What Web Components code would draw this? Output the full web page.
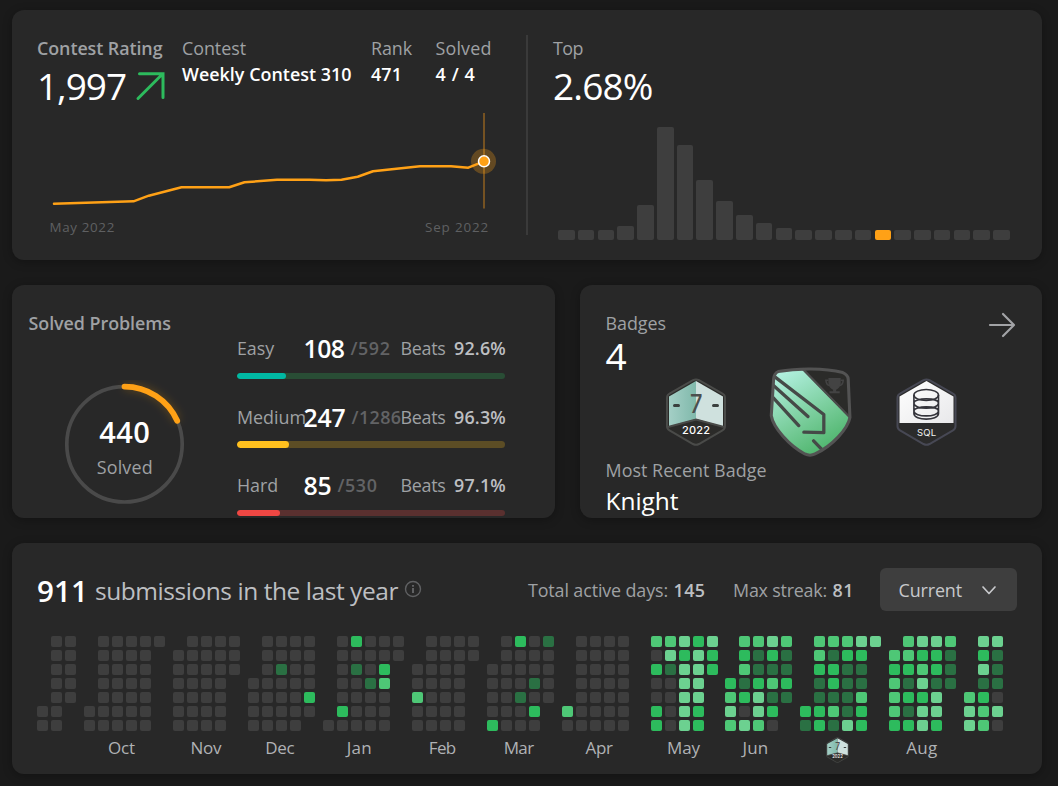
<!DOCTYPE html>
<html lang="en">
<head>
<meta charset="utf-8">
<title>Profile dashboard</title>
<style>
html,body{margin:0;background:#1a1a1a}
body{font-family:"Open Sans","Noto Sans",sans-serif;color:#fff;width:1058px;height:786px;overflow:hidden}
</style>
</head>
<body>
<profile-page></profile-page>

<template id="t-page">
<style>
:host{display:block;box-sizing:border-box;width:1058px;height:786px;padding:10px 16px 0 12px;
 --label:#9fa1a4;--soft:#bdbfc2;--dim:#626365;--orange:#ffa116}
.stack{display:flex;flex-direction:column;gap:25px}
.pair{display:flex;gap:25px}
</style>
<div class="stack">
 <panel-card style="height:250px"><contest-panel></contest-panel></panel-card>
 <div class="pair">
  <panel-card style="width:543px;height:233px"><solved-panel></solved-panel></panel-card>
  <panel-card style="width:462px;height:233px"><badges-panel></badges-panel></panel-card>
 </div>
 <panel-card style="height:231px"><calendar-panel></calendar-panel></panel-card>
</div>
</template>

<template id="t-contest">
<style>
:host{display:flex}
.left{width:514px;box-sizing:border-box;padding:25px 0 0 25px}
.head{display:grid;grid-template-columns:145px 189px 64.5px auto;height:75px}
.rating{display:flex;align-items:flex-start}
.rating svg{margin:10px 0 0 9px}
.line{display:block}
.dates{display:flex;justify-content:space-between;padding-left:12.5px;width:439.500px}
.rule{width:2px;height:200px;margin-top:25px;background:#3a3a3a}
.right{padding:25px 0 0 25px}
.bars{display:flex;align-items:flex-end;justify-content:space-between;width:452px;height:130px;margin-left:5px}
.bars i{width:16.6px;border-radius:2px;background:#3e3e3e}
.bars i.me{background:var(--orange)}
</style>
<div class="left">
 <div class="head">
  <stat-item><fit-text slot="label" w="125.5" style="font-weight:600">Contest Rating</fit-text>
   <div class="rating"><fit-text s="37" l="49" w="89">1,997</fit-text>
   <svg width="30" height="30" viewBox="0 0 30 30" fill="none" stroke="#2dbb5d" stroke-width="3" stroke-linecap="round" stroke-linejoin="miter"><path d="M4.5 2.800H28V26.500M27.500 3L3 27.500"/></svg></div></stat-item>
  <stat-item><fit-text slot="label" w="64">Contest</fit-text><fit-text w="169.5" style="font-weight:600">Weekly Contest 310</fit-text></stat-item>
  <stat-item><fit-text slot="label" w="41">Rank</fit-text><fit-text w="31" style="font-weight:600">471</fit-text></stat-item>
  <stat-item><fit-text slot="label" w="56">Solved</fit-text><fit-text w="40" style="font-weight:600">4 / 4</fit-text></stat-item>
 </div>
 <svg class="line" width="477" height="102" viewBox="37 110 477 102" fill="none">
  <path d="M484 113V208.500" stroke="#8f6020" stroke-width="1.500"/>
  <circle cx="483.500" cy="161.300" r="12.500" fill="#ffa116" fill-opacity=".28"/>
  <path d="M54 203.700L133.500 201.300L148.800 195.700L181.500 187.300H229.200L244.500 182.300L277 179.700H309.500L326 180.300L341.500 179.700L357.700 176.700L373 171.300L420 166.300H451L468.300 167.700L484 161.300" stroke="#ffa116" stroke-width="2.500" stroke-linejoin="round" stroke-linecap="round"/>
  <circle cx="484" cy="161.300" r="5.500" fill="#ffa116" stroke="#fff" stroke-width="1.500"/>
 </svg>
 <div class="dates"><fit-text s="13.4" l="30" w="65.5" style="color:#5f6062">May 2022</fit-text><fit-text s="13.4" l="30" w="64" style="color:#5f6062">Sep 2022</fit-text></div>
</div>
<div class="rule"></div>
<div class="right">
 <stat-item style="height:75px"><fit-text slot="label" w="30">Top</fit-text><fit-text s="37" l="49" w="99.5">2.68%</fit-text></stat-item>
 <div class="bars"></div>
</div>
</template>

<template id="t-solved">
<style>
:host{display:flex;padding:25px 0 0 16px}
.left{width:209px}
.ring{display:grid;width:130px;margin:44px 0 0 31px}
.ring>*{grid-area:1/1}
.num{display:flex;flex-direction:column;align-items:center;padding:33.300px 0 0 1.500px;gap:4.700px}
.rows{padding-top:25.2px}
</style>
<div class="left">
 <fit-text w="142.5" style="font-weight:600;color:var(--label);margin-left:.5px">Solved Problems</fit-text>
 <div class="ring">
  <svg width="130" height="130" viewBox="59 380 130 130" fill="none">
   <defs><filter id="glow" x="-20%" y="-20%" width="150%" height="150%"><feGaussianBlur stdDeviation="4"/></filter></defs>
   <circle cx="124.500" cy="444.300" r="57.700" stroke="#4a4a4a" stroke-width="3.700"/>
   <path d="M124.500 386.600A57.700 57.700 0 0 1 177.200 420.800" stroke="#ffa116" stroke-opacity=".25" stroke-width="7" filter="url(#glow)"/>
   <path d="M124.500 386.600A57.700 57.700 0 0 1 177.200 420.800" stroke="#ffa116" stroke-width="5.800" stroke-linecap="round"/>
  </svg>
  <div class="num"><fit-text s="29" l="36" w="51" style="font-weight:600">440</fit-text><fit-text w="56" style="color:var(--label)">Solved</fit-text></div>
 </div>
</div>
<div class="rows">
 <level-row name="Easy" nw="37" done="108" dw="41" total="/592" tw="40" beats="92.6%" fill="49" c="#00b8a3" track="#294d35"></level-row>
 <level-row name="Medium" nw="69" done="247" dw="42" total="/1286" tw="50" beats="96.3%" fill="52" c="#ffc01e" track="#5c4d25"></level-row>
 <level-row name="Hard" nw="41" done="85" dw="28" total="/530" tw="40" beats="97.1%" fill="43" c="#ef4743" track="#5a302f"></level-row>
</div>
</template>

<template id="t-badges">
<style>
:host{display:block;padding:25px 26px 0 25.500px}
.top{display:flex;justify-content:space-between}
.top svg{margin-top:1px}
.medals{display:flex;align-items:flex-start;height:89px;margin:-7px 0 0 60.500px;position:relative}
.medals>*{flex:none}
.knight{margin:-1px 43.500px 0 43px}
.side{margin-top:9.500px}
.col{display:flex;flex-direction:column;color:#fff}
</style>
<div class="top">
 <div class="col"><fit-text w="60.5" style="color:var(--label)">Badges</fit-text><fit-text s="37" l="39" w="21">4</fit-text></div>
 <svg width="28" height="28" viewBox="0 0 28 28" fill="none" stroke="#a2a3a6" stroke-width="2.200" stroke-linecap="round" stroke-linejoin="round"><path d="M2 14H25.500M15 3L26 14L15 25"/></svg>
</div>
<div class="medals">
 <month-medal class="side" style="width:60px;height:68px"></month-medal>
 <svg class="knight" width="83" height="90" viewBox="0 0 81 89" preserveAspectRatio="none" fill="none">
  <defs><linearGradient id="k" x1=".2" y1="0" x2=".75" y2="1"><stop offset="0" stop-color="#b5f2e4"/><stop offset=".55" stop-color="#79cd9b"/><stop offset="1" stop-color="#46b063"/></linearGradient>
  <clipPath id="kc"><path d="M9 4.500C28 1 54 1 72 5.500Q77 7.500 77.300 12L79 50C77 61 62 78 45 86Q40 88.500 35 86C20 78 4 60 2.200 48L4.500 12Q5 6 9 4.500Z"/></clipPath></defs>
  <g clip-path="url(#kc)"><rect width="81" height="89" fill="#2b2b29"/>
   <path d="M-2 0H30L81 53V89H-2Z" fill="url(#k)"/>
   <path d="M31 0L82 53" stroke="#4c4c4c" stroke-width="2.200"/>
   <path d="M6 10L53.500 47V65L34 64.500M3 17L38 49M2 28L29 58M43.500 73L52 82" stroke="#454947" stroke-width="3.200" stroke-linecap="round" stroke-linejoin="round"/></g>
  <path d="M9 4.500C28 1 54 1 72 5.500Q77 7.500 77.300 12L79 50C77 61 62 78 45 86Q40 88.500 35 86C20 78 4 60 2.200 48L4.500 12Q5 6 9 4.500Z" stroke="#535353" stroke-width="3"/>
  <path d="M58 11H70V16Q69 21 65.500 22.500V24H69V26H59V24H62.500V22.500Q59 21 58 16Z" fill="#434343"/><path d="M58 13H55.500Q56 18.500 60 18.500M70 13H72.500Q72 18.500 68 18.500" stroke="#434343" stroke-width="1.500"/>
 </svg>
 <svg class="side" width="61" height="68" viewBox="0 0 61 68" fill="none">
  <defs><linearGradient id="w" x1="0" y1="0" x2="1" y2="1"><stop offset="0" stop-color="#fff"/><stop offset="1" stop-color="#e8e8ea"/></linearGradient></defs>
  <path d="M27.500 2.200Q30.500.7 33.500 2.200L57 15.700Q59.500 17 59.500 20V48Q59.500 51 57 52.400L33.500 66Q30.500 67.500 27.500 66L4 52.400Q1.500 51 1.500 48V20Q1.500 17 4 15.700Z" fill="#2b2b2b" stroke="#474854" stroke-width="2"/>
  <path d="M3.500 18.500L30.500 3L57.500 18.500V45H3.500Z" fill="url(#w)"/>
  <g stroke="#34343b" stroke-width="1.600"><ellipse cx="30.200" cy="17" rx="12.300" ry="5.500"/><path d="M17.900 17V35.500C17.900 43 42.500 43 42.500 35.500V17M17.900 25C17.900 32 42.500 32 42.500 25C42.500 19.500 17.900 19.500 17.900 25M17.900 33C17.900 39.500 42.500 39.500 42.500 33C42.500 27.500 17.900 27.500 17.900 33"/></g>
  <text x="21" y="57.500" textLength="19" lengthAdjust="spacing" font-family="Inter,sans-serif" font-size="9.500" fill="#f2f2f2">SQL</text>
 </svg>
</div>
<div class="col">
 <fit-text w="161" style="color:var(--label)">Most Recent Badge</fit-text>
 <fit-text s="24.5" l="35" w="73">Knight</fit-text>
</div>
</template>

<template id="t-medal">
<style>:host{display:block}svg{display:block;width:100%;height:100%}</style>
<svg viewBox="0 0 60 68" fill="none">
 <defs><linearGradient id="a" x1="0" y1="0" x2="1" y2="0"><stop offset="0" stop-color="#a4cfc6"/><stop offset="1" stop-color="#80b9ab"/></linearGradient></defs>
 <path d="M27 2.200Q30 .7 33 2.200L56.500 15.700Q59 17 59 20V48Q59 51 56.500 52.400L33 66Q30 67.500 27 66L3.500 52.400Q1 51 1 48V20Q1 17 3.500 15.700Z" fill="#2b2b29" stroke="#4a4b49" stroke-width="2"/>
 <path d="M30 3V41L3 48.500V18.500Z" fill="url(#a)"/>
 <path d="M30 3V41L57 48.500V18.500Z" fill="#cfe1de"/>
 <path d="M2 49L30 41.500L58 49" stroke="#484947" stroke-width="2"/>
 <path d="M8.500 27.500H12.500M47.500 27.500H51.500" stroke="#3a403e" stroke-width="3" stroke-linecap="round"/>
 <text x="24" y="35" font-family="Inter,sans-serif" font-weight="500" font-size="26" textLength="12.500" lengthAdjust="spacingAndGlyphs" fill="#4c4f4e">7</text>
 <text x="16" y="56" font-family="Inter,sans-serif" font-weight="500" font-size="11" textLength="28" lengthAdjust="spacing" fill="#fff">2022</text>
</svg>
</template>

<template id="t-calendar">
<style>
:host{display:block;padding:25px 25px 0 25px}
.head{display:flex;align-items:center;height:43px}
.soft{color:var(--soft)}.label{color:var(--label)}.b{font-weight:600}
.big{padding-top:1px}
.info{margin:-1.500px auto 0 5.500px}
.select{display:flex;align-items:center;justify-content:space-between;box-sizing:border-box;width:137px;height:43px;padding:0 20px 0 18.500px;border-radius:6px;background:#3e3e3e;margin-left:26px;color:#c8c9cc}
.months{display:flex;gap:7.950px;margin-top:25px}
</style>
<div class="head">
 <fit-text class="b big" s="29.5" l="42" w="51">911</fit-text>
 <fit-text class="soft big" s="24.5" l="42" w="303" style="margin-left:7px">submissions in the last year</fit-text>
 <svg class="info" width="18" height="18" viewBox="0 0 18 18" fill="none" stroke="#606163" stroke-width="1.400"><circle cx="9" cy="9" r="7.500"/><path d="M9 8V13" stroke-width="2"/><path d="M9 5V6.700" stroke-width="2"/></svg>
 <fit-text class="label" w="140">Total active days:</fit-text>
 <fit-text class="soft b" w="32" style="margin-left:5.500px">145</fit-text>
 <fit-text class="label" w="94" style="margin-left:27.500px">Max streak:</fit-text>
 <fit-text class="soft b" w="21.5" style="margin-left:5.500px">81</fit-text>
 <div class="select"><fit-text w="63.5">Current</fit-text><svg width="16" height="16" viewBox="0 0 16 16" fill="none" stroke="#c8c9cc" stroke-width="1.700" stroke-linecap="round" stroke-linejoin="round"><path d="M2 5L8 11.500L14 5"/></svg></div>
</div>
<div class="months"></div>
</template>

<script>
const tpl = id => document.getElementById(id).content.cloneNode(true);

/* Text run whose tracking is adjusted to a set advance width. */
class FitText extends HTMLElement {
  connectedCallback() {
    if (this.shadowRoot) return;
    const s = +(this.getAttribute('s') || 17.9), l = +(this.getAttribute('l') || 26), w = +this.getAttribute('w');
    const lh = s < 30 ? l + 1 : l;
    const root = this.attachShadow({mode: 'open'});
    root.innerHTML = `<style>:host{display:block;flex:none;width:${w}px;height:${l}px;font-size:${s}px;line-height:${lh}px;white-space:pre}
      span{display:inline-block;vertical-align:top}</style><span><slot></slot></span>`;
    const span = root.querySelector('span');
    const natural = span.getBoundingClientRect().width;
    const n = this.textContent.length;
    if (natural) span.style.letterSpacing = ((w - natural) / n).toFixed(3) + 'px';
  }
}

class PanelCard extends HTMLElement {
  constructor() {
    super();
    this.attachShadow({mode: 'open'}).innerHTML = `<style>:host{display:block;box-sizing:border-box;flex:none;border-radius:12px;background:#282828;box-shadow:0 2px 10px rgba(0,0,0,.28)}</style><slot></slot>`;
  }
}

class StatItem extends HTMLElement {
  constructor() {
    super();
    this.attachShadow({mode: 'open'}).innerHTML = `<style>:host{display:block}.l{color:var(--label)}</style><div class="l"><slot name="label"></slot></div><slot></slot>`;
  }
}

class LevelRow extends HTMLElement {
  connectedCallback() {
    if (this.shadowRoot) return;
    const a = k => this.getAttribute(k);
    this.attachShadow({mode: 'open'}).innerHTML = `<style>
      :host{display:block;width:268px;height:68.600px;color:var(--label)}
      .t{display:grid;grid-template-columns:66.500px 97px 53.500px auto;align-items:center;height:26px}
      .n{display:flex;gap:6px}
      .bar{height:6.250px;border-radius:4px;background:${a('track')};margin-top:11.600px;overflow:hidden}
      .bar i{display:block;height:100%;width:${a('fill')}px;border-radius:4px;background:${a('c')}}
      </style><div class="t"><fit-text w="${a('nw')}">${a('name')}</fit-text>
      <div class="n"><fit-text s="24.8" w="${a('dw')}" style="font-weight:600;color:#fff">${a('done')}</fit-text><fit-text w="${a('tw')}" style="font-weight:600;color:var(--dim)">${a('total')}</fit-text></div>
      <fit-text w="45">Beats</fit-text><fit-text w="52" style="font-weight:600;color:var(--soft)">${a('beats')}</fit-text></div>
      <div class="bar"><i></i></div>`;
  }
}

class ContestPanel extends HTMLElement {
  constructor() {
    super();
    this.attachShadow({mode: 'open'}).append(tpl('t-contest'));
    const bars = this.shadowRoot.querySelector('.bars');
    [10,10,10,14,35,113,95,60,39,25,17.5,12.5,10,10,10,10,10,10,10,10,10,10,10].forEach((h, i) => {
      const b = document.createElement('i');
      b.style.height = h + 'px';
      if (i === 16) b.className = 'me';
      bars.append(b);
    });
  }
}

/* One month of activity; each column is a week, '.' marks a day outside the month. */
class MonthGrid extends HTMLElement {
  connectedCallback() {
    if (this.shadowRoot) return;
    const cells = this.getAttribute('weeks').split(' ').map(c => c.padEnd(7, '.')).join('');
    const name = this.getAttribute('name'), shift = this.getAttribute('shift') || 0;
    const label = name === 'medal' ? '<month-medal></month-medal>' : name ? `<fit-text s="17" w="${this.getAttribute('w')}">${name}</fit-text>` : '';
    this.attachShadow({mode: 'open'}).innerHTML = `<style>
      :host{display:block;flex:none;color:#b0b2b5}
      .g{display:grid;grid-template-rows:repeat(7,11px);grid-auto-columns:11px;grid-auto-flow:column;gap:3px}
      .g i{border-radius:2px;background:#3e3e3e}
      .g .x{visibility:hidden}.g .c1{background:#2a7043}.g .c2{background:#2dbb5d}.g .c3{background:#4ec776}.g .c4{background:#6cd190}
      .l{display:flex;justify-content:center;margin-top:3px;padding-right:${shift * 2}px}
      month-medal{width:23px;height:26px;margin-top:2.500px}
      </style><div class="g">${[...cells].map(c => `<i class="${c === '.' ? 'x' : 'c' + c}"></i>`).join('')}</div><div class="l">${label}</div>`;
  }
}

class CalendarPanel extends HTMLElement {
  constructor() {
    super();
    this.attachShadow({mode: 'open'}).append(tpl('t-calendar'));
    const data = [
      ['', 0, 0, '.....00 0000000 00000'],
      ['Oct', 27, 3, '.....00 0000000 0000000 0000000 0000000 0'],
      ['Nov', 31, .5, '.000000 0000000 0000000 0000000 000'],
      ['Dec', 29, 1.5, '...0000 0000000 0010000 0000000 000020'],
      ['Jan', 25, 4, '......0 0000020 2010000 0001000 0023000 00'],
      ['Feb', 27, 3, '..00300 0000000 0000000 0000000 00'],
      ['Mar', 30, 1.5, '..00002 0000000 2000100 0001020 10000'],
      ['Apr', 27, 3, '.....30 0000000 0000000 0000000 0000000 .'],
      ['May', 33, .5, '3020022 3410000 4244444 2444422 422'],
      ['Jun', 26, 3.5, '...2343 3231204 3112443 4213120 31121'],
      ['medal', 0, 3, '.....21 3321122 3122131 3211114 4211322 4'],
      ['Aug', 31, 1, '.323332 3321212 4234244 4221442 3111'],
      ['', 0, 0, '....344 4241233 4111040']
    ];
    const box = this.shadowRoot.querySelector('.months');
    for (const [name, w, shift, weeks] of data) {
      const m = document.createElement('month-grid');
      m.setAttribute('name', name); m.setAttribute('w', w);
      m.setAttribute('shift', shift); m.setAttribute('weeks', weeks);
      box.append(m);
    }
  }
}

const simple = id => class extends HTMLElement {
  constructor() { super(); this.attachShadow({mode: 'open'}).append(tpl(id)); }
};
customElements.define('panel-card', PanelCard);
customElements.define('stat-item', StatItem);
customElements.define('month-medal', simple('t-medal'));
customElements.define('level-row', LevelRow);
customElements.define('month-grid', MonthGrid);
customElements.define('contest-panel', ContestPanel);
customElements.define('solved-panel', simple('t-solved'));
customElements.define('badges-panel', simple('t-badges'));
customElements.define('calendar-panel', CalendarPanel);
customElements.define('profile-page', simple('t-page'));
customElements.define('fit-text', FitText);
</script>
</body>
</html>
